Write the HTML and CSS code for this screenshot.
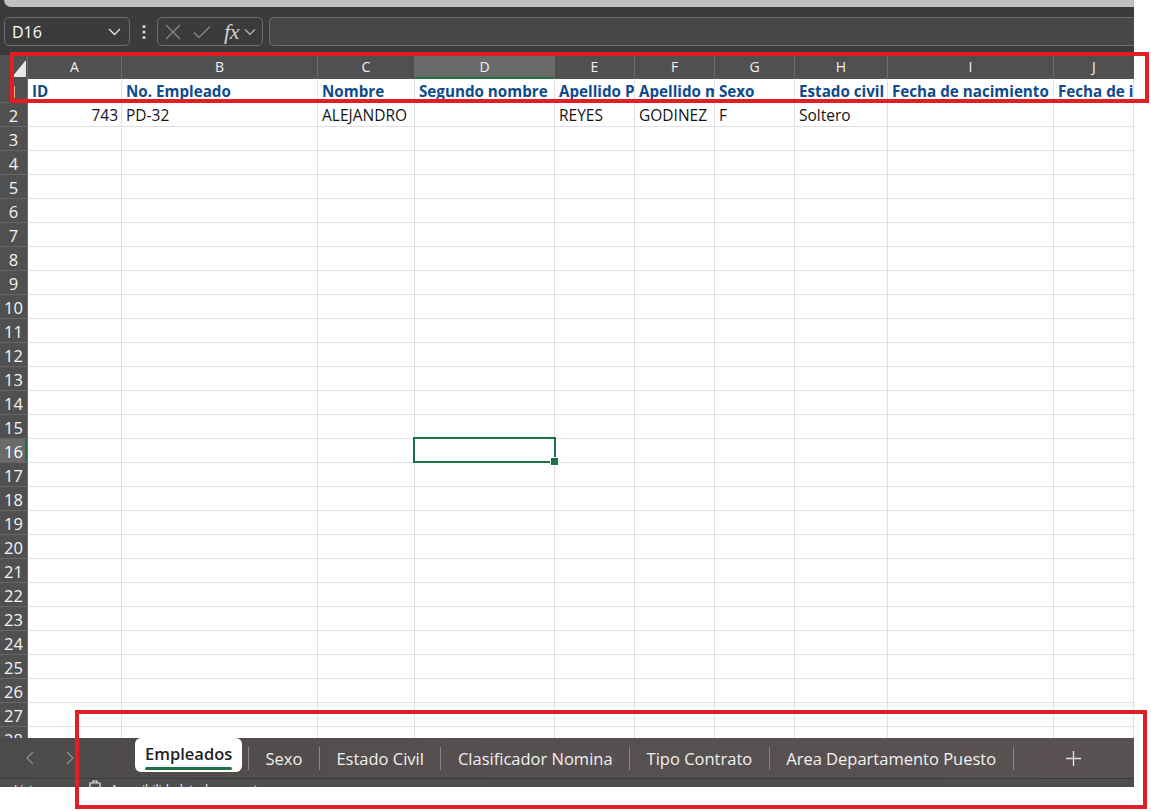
FILE: index.html
```html
<!DOCTYPE html>
<html lang="es">
<head>
<meta charset="utf-8">
<title>Empleados - Excel</title>
<link rel="stylesheet" href="styles.css">
</head>
<body>
<div class="app">
  <div class="chrome">
    <div class="topstrip"></div>
    <div class="formula">
      <div class="namebox">
        <span>D16</span>
        <svg width="13" height="8" viewBox="0 0 13 8"><polyline points="1,1 6.5,6.5 12,1" fill="none" stroke="#e6e6e6" stroke-width="1.3"/></svg>
      </div>
      <div class="more">
        <svg width="4" height="16" viewBox="0 0 4 16"><circle cx="2" cy="2.5" r="1.6" fill="#d6d6d6"/><circle cx="2" cy="8" r="1.6" fill="#d6d6d6"/><circle cx="2" cy="13.5" r="1.6" fill="#d6d6d6"/></svg>
      </div>
      <div class="fxbox">
        <svg class="ic-x" width="16" height="16" viewBox="0 0 16 16"><path d="M1 1 L15 15 M15 1 L1 15" stroke="#8c8c8c" stroke-width="1.2" fill="none"/></svg>
        <svg class="ic-ok" width="18" height="14" viewBox="0 0 18 14"><polyline points="1,7.5 6,12.5 17,1.5" fill="none" stroke="#8c8c8c" stroke-width="1.2"/></svg>
        <span class="fx">fx</span>
        <svg class="ic-dd" width="12" height="8" viewBox="0 0 12 8"><polyline points="1,1.5 6,6.5 11,1.5" fill="none" stroke="#bdbdbd" stroke-width="1.2"/></svg>
      </div>
      <div class="input"></div>
    </div>
  </div>

  <div class="sheet">
    <div class="row head">
      <span class="corner"><svg width="14" height="17" viewBox="0 0 14 17"><polygon points="14,0 14,17 0,17" fill="#e8e8e8"/></svg></span>
      <span>A</span><span>B</span><span>C</span><span class="hl">D</span><span>E</span><span>F</span><span>G</span><span>H</span><span>I</span><span class="last">J</span>
    </div>
    <div class="row h1">
      <span class="rh">1</span><span>ID</span><span>No. Empleado</span><span>Nombre</span><span>Segundo nombre</span><span>Apellido P</span><span>Apellido m</span><span>Sexo</span><span>Estado civil</span><span>Fecha de nacimiento</span><span>Fecha de i</span>
    </div>
    <div class="row">
      <span class="rh">2</span><span class="num">743</span><span>PD-32</span><span>ALEJANDRO</span><span></span><span>REYES</span><span>GODINEZ</span><span>F</span><span>Soltero</span><span></span><span></span>
    </div>
    <div class="row"><span class="rh">3</span><span></span><span></span><span></span><span></span><span></span><span></span><span></span><span></span><span></span><span></span></div>
    <div class="row"><span class="rh">4</span><span></span><span></span><span></span><span></span><span></span><span></span><span></span><span></span><span></span><span></span></div>
    <div class="row"><span class="rh">5</span><span></span><span></span><span></span><span></span><span></span><span></span><span></span><span></span><span></span><span></span></div>
    <div class="row"><span class="rh">6</span><span></span><span></span><span></span><span></span><span></span><span></span><span></span><span></span><span></span><span></span></div>
    <div class="row"><span class="rh">7</span><span></span><span></span><span></span><span></span><span></span><span></span><span></span><span></span><span></span><span></span></div>
    <div class="row"><span class="rh">8</span><span></span><span></span><span></span><span></span><span></span><span></span><span></span><span></span><span></span><span></span></div>
    <div class="row"><span class="rh">9</span><span></span><span></span><span></span><span></span><span></span><span></span><span></span><span></span><span></span><span></span></div>
    <div class="row"><span class="rh">10</span><span></span><span></span><span></span><span></span><span></span><span></span><span></span><span></span><span></span><span></span></div>
    <div class="row"><span class="rh">11</span><span></span><span></span><span></span><span></span><span></span><span></span><span></span><span></span><span></span><span></span></div>
    <div class="row"><span class="rh">12</span><span></span><span></span><span></span><span></span><span></span><span></span><span></span><span></span><span></span><span></span></div>
    <div class="row"><span class="rh">13</span><span></span><span></span><span></span><span></span><span></span><span></span><span></span><span></span><span></span><span></span></div>
    <div class="row"><span class="rh">14</span><span></span><span></span><span></span><span></span><span></span><span></span><span></span><span></span><span></span><span></span></div>
    <div class="row"><span class="rh">15</span><span></span><span></span><span></span><span></span><span></span><span></span><span></span><span></span><span></span><span></span></div>
    <div class="row"><span class="rh hl">16</span><span></span><span></span><span></span><span class="sel"></span><span></span><span></span><span></span><span></span><span></span><span></span></div>
    <div class="row"><span class="rh">17</span><span></span><span></span><span></span><span></span><span></span><span></span><span></span><span></span><span></span><span></span></div>
    <div class="row"><span class="rh">18</span><span></span><span></span><span></span><span></span><span></span><span></span><span></span><span></span><span></span><span></span></div>
    <div class="row"><span class="rh">19</span><span></span><span></span><span></span><span></span><span></span><span></span><span></span><span></span><span></span><span></span></div>
    <div class="row"><span class="rh">20</span><span></span><span></span><span></span><span></span><span></span><span></span><span></span><span></span><span></span><span></span></div>
    <div class="row"><span class="rh">21</span><span></span><span></span><span></span><span></span><span></span><span></span><span></span><span></span><span></span><span></span></div>
    <div class="row"><span class="rh">22</span><span></span><span></span><span></span><span></span><span></span><span></span><span></span><span></span><span></span><span></span></div>
    <div class="row"><span class="rh">23</span><span></span><span></span><span></span><span></span><span></span><span></span><span></span><span></span><span></span><span></span></div>
    <div class="row"><span class="rh">24</span><span></span><span></span><span></span><span></span><span></span><span></span><span></span><span></span><span></span><span></span></div>
    <div class="row"><span class="rh">25</span><span></span><span></span><span></span><span></span><span></span><span></span><span></span><span></span><span></span><span></span></div>
    <div class="row"><span class="rh">26</span><span></span><span></span><span></span><span></span><span></span><span></span><span></span><span></span><span></span><span></span></div>
    <div class="row"><span class="rh">27</span><span></span><span></span><span></span><span></span><span></span><span></span><span></span><span></span><span></span><span></span></div>
    <div class="row"><span class="rh">28</span><span></span><span></span><span></span><span></span><span></span><span></span><span></span><span></span><span></span><span></span></div>
  </div>

  <div class="tabs">
    <div class="nav">
      <svg width="8" height="14" viewBox="0 0 8 14"><polyline points="7,1 1,7 7,13" fill="none" stroke="#8e8e8e" stroke-width="1.3"/></svg>
      <svg width="8" height="14" viewBox="0 0 8 14"><polyline points="1,1 7,7 1,13" fill="none" stroke="#8e8e8e" stroke-width="1.3"/></svg>
    </div>
    <div class="tab active"><span class="label">Empleados</span><span class="underline"></span></div>
    <div class="sep first"></div>
    <div class="tab">Sexo</div>
    <div class="sep"></div>
    <div class="tab">Estado Civil</div>
    <div class="sep"></div>
    <div class="tab">Clasificador Nomina</div>
    <div class="sep"></div>
    <div class="tab">Tipo Contrato</div>
    <div class="sep"></div>
    <div class="tab">Area Departamento Puesto</div>
    <div class="sep"></div>
    <div class="plus">
      <svg width="15" height="15" viewBox="0 0 15 15"><path d="M7.5 0 V15 M0 7.5 H15" stroke="#e2e2e2" stroke-width="1.4" fill="none"/></svg>
    </div>
  </div>
  <div class="status">
    <span class="st-ready">Listo</span>
    <svg class="st-icon" width="16" height="14" viewBox="0 0 16 14"><path d="M5 3 H11 M6 3 V1 H10 V3 M3 3 H13 V13 H3 Z" fill="none" stroke="#e6e6e6" stroke-width="1.2"/></svg>
    <span class="st-acc">Accesibilidad: todo correcto</span>
  </div>
</div>

<div class="mark mark-top"></div>
<div class="mark mark-bottom"></div>
</body>
</html>
```

FILE: styles.css
```css
* { box-sizing: border-box; }

body {
  margin: 0;
  background: #ffffff;
  font-family: "Open Sans", "Noto Sans", sans-serif;
}

.app {
  width: 1134px;
}

/* ---------- top chrome / formula bar ---------- */
.chrome {
  background: #3b3b3b;
}

.topstrip {
  height: 7px;
  margin-left: 4px;
  background: #c1c1c1;
  border-bottom-left-radius: 8px;
}

.formula {
  display: flex;
  align-items: center;
  height: 48px;
  padding: 10px 0 9px 4px;
}

.namebox {
  width: 126px;
  height: 29px;
  border: 1px solid #6d6d6d;
  border-radius: 5px;
  display: flex;
  align-items: center;
  justify-content: space-between;
  padding: 0 8px 0 7px;
  color: #ffffff;
  font-size: 16px;
}

.more {
  width: 27px;
  display: flex;
  justify-content: center;
  align-items: center;
}

.fxbox {
  width: 106px;
  height: 29px;
  border: 1px solid #6d6d6d;
  border-radius: 5px;
  display: flex;
  align-items: center;
  padding-left: 7px;
}

.ic-ok { margin-left: 12px; }

.fx {
  margin-left: 13px;
  font-family: "Liberation Serif", "DejaVu Serif", serif;
  font-style: italic;
  font-size: 22px;
  line-height: 20px;
  color: #d2d2d2;
  letter-spacing: -0.3px;
}

.ic-dd { margin-left: 5px; }

.input {
  flex: 1;
  height: 29px;
  margin-left: 6px;
  background: #474747;
  border: 1px solid #6d6d6d;
  border-right: 0;
  border-radius: 5px 0 0 5px;
}

/* ---------- grid ---------- */
.sheet {
  height: 683px;
  overflow: hidden;
  background: #ffffff;
}

.row {
  display: grid;
  grid-template-columns: 28px 94px 196px 97px 140px 80px 80px 80px 93px 166px 80px;
  height: 24px;
}

.row > span {
  position: relative;
  border-right: 1px solid #e0e0e0;
  border-bottom: 1px solid #e0e0e0;
  padding: 1px 4px 0;
  font-size: 15.5px;
  line-height: 23px;
  white-space: nowrap;
  overflow: hidden;
  color: #141414;
}

.row > .rh {
  background: #505050;
  color: #f4f4f4;
  border-right-color: #6c6c6c;
  border-bottom-color: #666666;
  text-align: center;
  padding: 1px 0 0;
  font-size: 16.5px;
  line-height: 23px;
}

.row > .rh.hl {
  background: #6a6a6a;
  box-shadow: inset -2px 0 0 #1f7244;
  color: #ffffff;
}

.head > span {
  background: #505050;
  border-right-color: #6c6c6c;
  border-bottom: 0;
  color: #f0f0f0;
  text-align: center;
  font-size: 14px;
  line-height: 24px;
  padding: 0;
}

.head > span.last { border-right: 0; }

.head > .corner {
  display: flex;
  align-items: flex-end;
  justify-content: flex-end;
  padding: 0 1px 2px 0;
}

.head > .hl {
  background: #6a6a6a;
  box-shadow: inset 0 -2px 0 #1f7244;
}

.h1 > span:not(.rh) {
  color: #0e4b8c;
  font-weight: 700;
  font-size: 15.2px;
}

.row > .num {
  text-align: right;
  padding-right: 3px;
}

.row > .sel {
  overflow: visible;
}

.row > .sel::after {
  content: "";
  position: absolute;
  left: -2px;
  top: -2px;
  right: -2px;
  bottom: -1px;
  border: 2px solid #1e7145;
}

.row > .sel::before {
  content: "";
  position: absolute;
  right: -5px;
  bottom: -4px;
  width: 7px;
  height: 7px;
  background: #1e7145;
  border: 1px solid #ffffff;
  z-index: 2;
}

/* ---------- sheet tabs ---------- */
.tabs {
  height: 41px;
  display: flex;
  align-items: flex-start;
  background: linear-gradient(90deg, #4c4a4a 0%, #564f4f 40%, #5a5252 100%);
  border-bottom: 1px solid #3a3a3a;
}

.nav {
  width: 135px;
  height: 40px;
  display: flex;
  align-items: center;
  padding-left: 26px;
  gap: 32px;
}

.tab {
  height: 40px;
  display: flex;
  align-items: center;
  padding: 0 16.5px;
  color: #f1f1f1;
  font-size: 16.5px;
  white-space: nowrap;
}

.tab.active {
  height: 34px;
  width: 107px;
  padding: 0 10px 2px;
  flex-direction: column;
  align-items: stretch;
  justify-content: flex-end;
  background: #ffffff;
  border-radius: 6px;
  color: #1f1f1f;
  font-weight: 600;
}

.tab.active .label {
  line-height: 22px;
  text-align: center;
}

.tab.active .underline {
  height: 3px;
  margin-top: 2px;
  background: #1e7145;
  border-radius: 2px;
}

.sep {
  width: 1px;
  height: 23px;
  background: #8a8686;
  align-self: center;
}

.sep.first { margin-left: 6px; }

.plus {
  height: 40px;
  display: flex;
  align-items: center;
  margin-left: 52px;
}

/* ---------- status bar ---------- */
.status {
  height: 8px;
  overflow: hidden;
  background: #4e4e4e;
  display: flex;
  align-items: flex-start;
  padding-left: 14px;
  color: #f0f0f0;
  font-size: 12px;
}

.status span {
  margin-top: 4px;
  line-height: 14px;
  white-space: nowrap;
}

.st-icon {
  margin: 1px 0 0 46px;
}

.st-acc { margin-left: 8px; }

/* ---------- annotation frames ---------- */
.mark {
  position: absolute;
  border: 4px solid #e31d24;
  pointer-events: none;
}

.mark-top {
  left: 10px;
  top: 52px;
  width: 1139px;
  height: 51px;
}

.mark-bottom {
  left: 75px;
  top: 710px;
  width: 1072px;
  height: 99px;
}
```
